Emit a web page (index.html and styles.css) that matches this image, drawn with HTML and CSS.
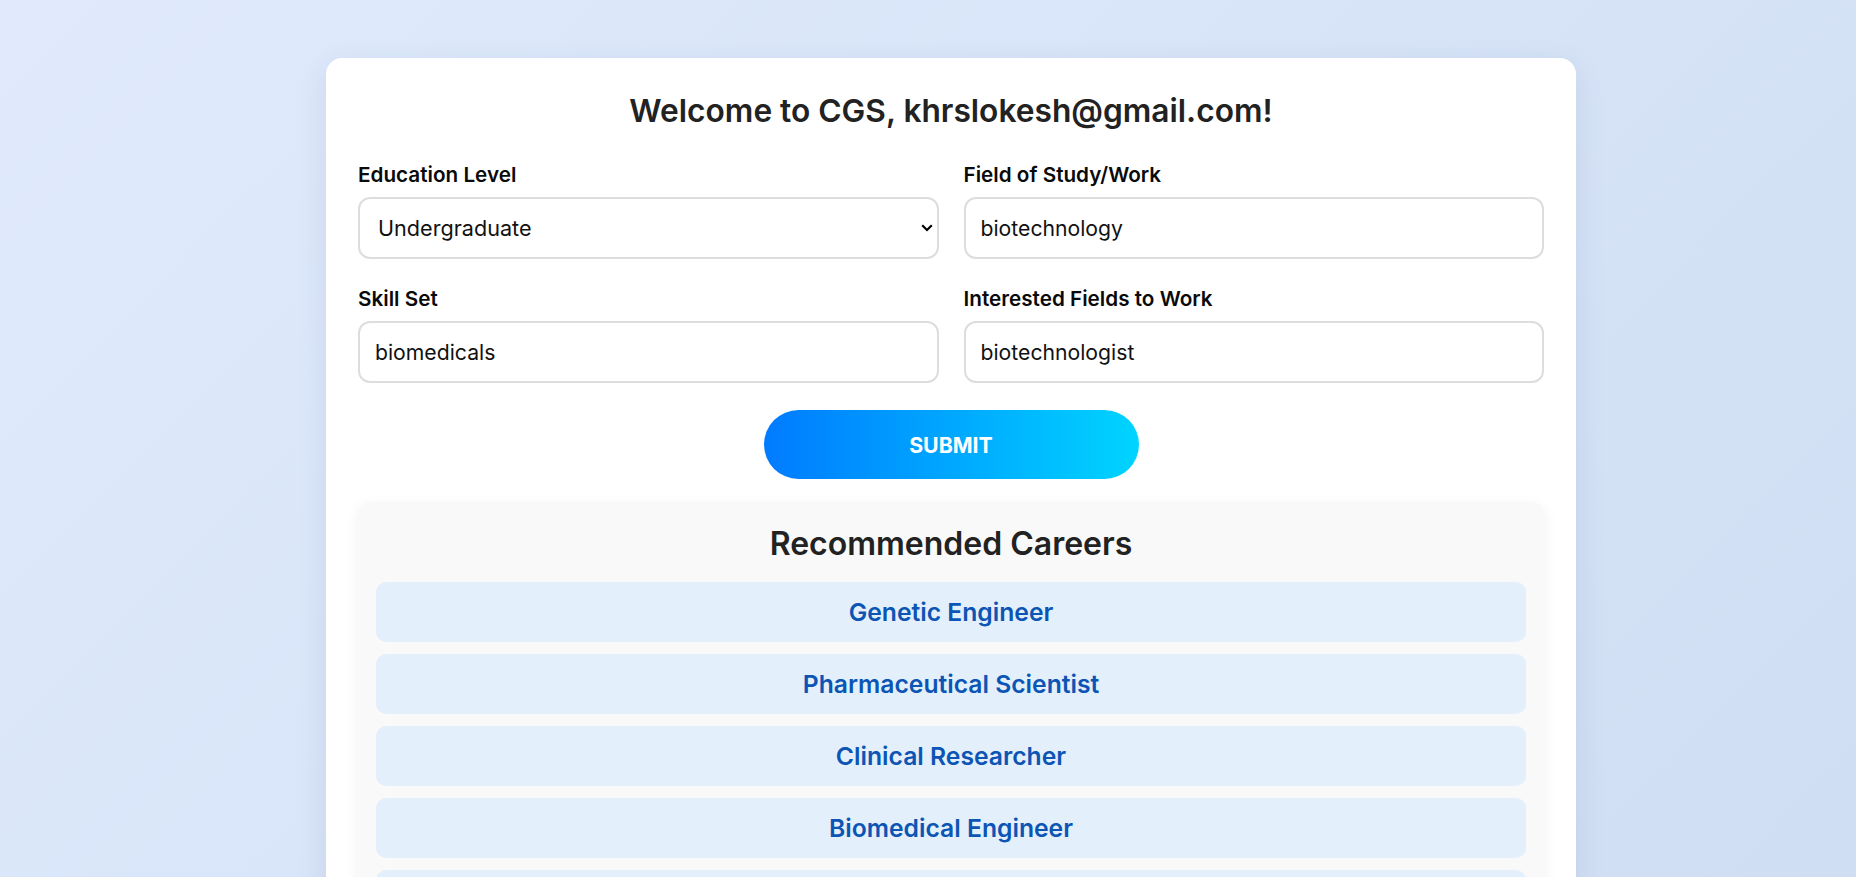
FILE: index.html
```html
<!DOCTYPE html>
<html lang="en">
<head>
<meta charset="utf-8">
<title>CGS - Career Guidance</title>
<link rel="stylesheet" href="styles.css">
</head>
<body>
<div class="page">
  <main class="card">
    <h1 class="title">Welcome to CGS, khrslokesh@gmail.com!</h1>
    <form class="form-grid">
      <div class="field">
        <label class="label" for="edu">Education Level</label>
        <div class="select-wrap">
          <select id="edu" class="input select">
            <option>Undergraduate</option>
            <option>High School</option>
            <option>Postgraduate</option>
          </select>
          <svg class="chevron" width="12" height="8" viewBox="0 0 12 8"><path d="M1.2 1.3 L6 6 L10.8 1.3" fill="none" stroke="#000" stroke-width="2.2"/></svg>
        </div>
      </div>
      <div class="field">
        <label class="label" for="study">Field of Study/Work</label>
        <input id="study" class="input" type="text" value="biotechnology">
      </div>
      <div class="field">
        <label class="label" for="skills">Skill Set</label>
        <input id="skills" class="input" type="text" value="biomedicals">
      </div>
      <div class="field">
        <label class="label" for="interest">Interested Fields to Work</label>
        <input id="interest" class="input" type="text" value="biotechnologist">
      </div>
    </form>
    <div class="actions">
      <button class="submit" type="button">Submit</button>
    </div>
    <section class="results">
      <h2 class="results-title">Recommended Careers</h2>
      <ul class="career-list">
        <li class="career">Genetic Engineer</li>
        <li class="career">Pharmaceutical Scientist</li>
        <li class="career">Clinical Researcher</li>
        <li class="career">Biomedical Engineer</li>
        <li class="career">Bioinformatics Specialist</li>
        <li class="career">Microbiologist</li>
      </ul>
    </section>
  </main>
</div>
</body>
</html>
```
FILE: styles.css
```css
html, body {
  margin: 0;
  padding: 0;
}
body {
  min-height: 100vh;
  background: linear-gradient(135deg, #e0eafc 0%, #cfdef3 100%) fixed;
  font-family: Inter, "Liberation Sans", sans-serif;
  color: #111;
}
.page {
  padding: 58px 0 40px 326px;
}
.card {
  box-sizing: border-box;
  width: 1250px;
  background: #fff;
  border-radius: 16px;
  padding: 35px 32px 32px;
  box-shadow: 0 8px 30px rgba(30, 60, 120, 0.10);
}
.title {
  margin: 0 0 34px;
  font-size: 31.7px;
  line-height: 36px;
  font-weight: 600;
  text-align: center;
  color: #222;
}
.form-grid {
  display: grid;
  grid-template-columns: 1fr 1fr;
  column-gap: 25px;
  row-gap: 28px;
}
.field {
  display: flex;
  flex-direction: column;
}
.label {
  display: block;
  margin-bottom: 10px;
  font-size: 20.7px;
  line-height: 24px;
  font-weight: 600;
  color: #0a0a0a;
}
.input {
  box-sizing: border-box;
  width: 100%;
  height: 62px;
  border: 2px solid #ddd;
  border-radius: 12px;
  padding: 0 15px;
  background: #fff;
  font-family: Inter, "Liberation Sans", sans-serif;
  font-size: 21.2px;
  color: #111;
  outline: none;
}
.select-wrap {
  position: relative;
}
.select {
  appearance: none;
  -webkit-appearance: none;
  padding-left: 18px;
  font-size: 21.6px;
}
.chevron {
  position: absolute;
  right: 6px;
  top: 27px;
  pointer-events: none;
}
.actions {
  display: flex;
  justify-content: center;
  margin-top: 27px;
}
.submit {
  width: 375px;
  height: 69px;
  border: none;
  border-radius: 35px;
  background: linear-gradient(90deg, #007bff 0%, #00d4ff 100%);
  color: #fff;
  font-family: Inter, "Liberation Sans", sans-serif;
  font-size: 21.3px;
  font-weight: 700;
  text-transform: uppercase;
  cursor: pointer;
}
.results {
  margin-top: 23px;
  background: #f9f9f9;
  border-radius: 12px;
  padding: 24px 18px 20px;
  box-shadow: 0 4px 15px rgba(0, 0, 0, 0.06);
}
.results-title {
  margin: 0 0 20px;
  font-size: 32px;
  line-height: 36px;
  font-weight: 600;
  text-align: center;
  color: #222;
}
.career-list {
  list-style: none;
  margin: 0;
  padding: 0;
  display: flex;
  flex-direction: column;
  gap: 12px;
}
.career {
  height: 60px;
  display: flex;
  align-items: center;
  justify-content: center;
  background: #e3f0fc;
  border-radius: 10px;
  color: #0c55b5;
  font-size: 24.7px;
  font-weight: 600;
}
```
